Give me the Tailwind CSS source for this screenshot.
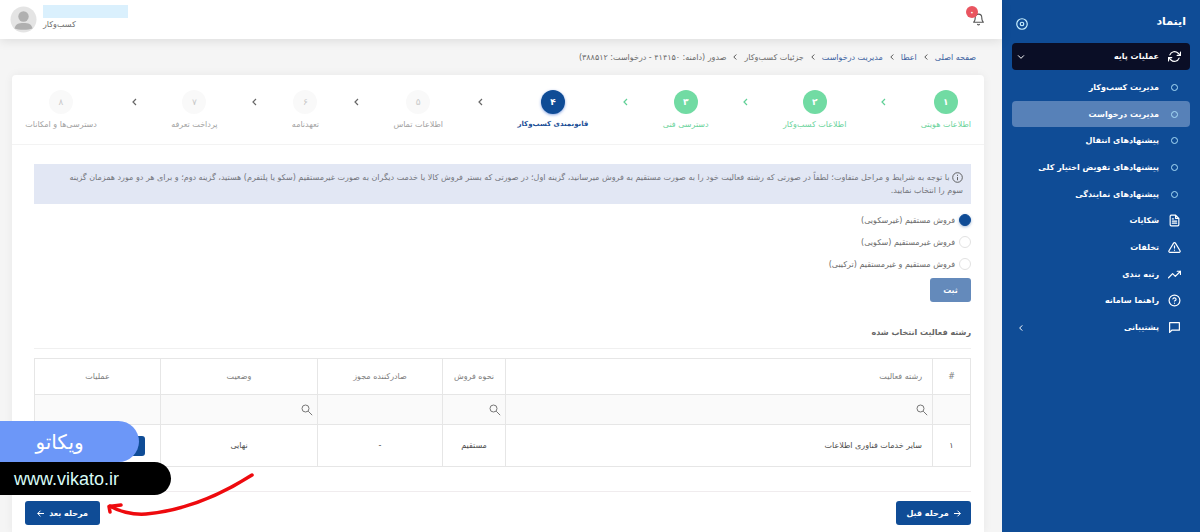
<!DOCTYPE html>
<html lang="fa" dir="rtl">
<head>
<meta charset="utf-8">
<meta name="viewport" content="width=device-width, initial-scale=1">
<title>اینماد</title>
<script src="https://cdn.jsdelivr.net/npm/@tailwindcss/browser@4"></script>
</head>
<body class="relative flex min-h-screen overflow-x-hidden bg-[#f5f5f5] font-['DejaVu_Sans',sans-serif] text-[8px] leading-[13px] text-[#6b6b6b]">

<aside class="w-[198px] shrink-0 bg-[#0f4c96] px-[10px] text-white">
  <div class="flex h-[43px] items-center justify-between px-1">
    <h1 class="text-[11px] font-bold">اینماد</h1>
    <button aria-label="جمع کردن منو" class="mt-1"><svg class="size-3" viewBox="0 0 24 24" fill="none" stroke="#c9f0ff" stroke-width="2.4"><circle cx="12" cy="12" r="10.5"/><circle cx="12" cy="12" r="3.5"/></svg></button>
  </div>
  <nav class="font-bold">
    <a href="#" class="flex h-[27px] items-center gap-[9px] rounded-sm bg-[#0a0e26] px-[9px]">
      <svg class="size-[13px]" viewBox="0 0 24 24" fill="none" stroke="currentColor" stroke-width="2.2" stroke-linecap="round" stroke-linejoin="round"><path d="M23 4v6h-6M1 20v-6h6"/><path d="M3.5 9a9 9 0 0 1 14.900-3.400L23 10M1 14l4.600 4.400A9 9 0 0 0 20.500 15"/></svg>
      <span class="grow">عملیات پایه</span>
      <svg class="-ml-1 size-2" viewBox="0 0 24 24" fill="none" stroke="currentColor" stroke-width="3" stroke-linecap="round" stroke-linejoin="round"><path d="M4 8l8 8 8-8"/></svg>
    </a>
    <ul class="mt-1">
      <li><a href="#" class="flex h-[27px] items-center gap-[9px] px-[9px]"><span class="flex w-[13px] justify-center"><span class="size-[7px] rounded-full border border-[#a9dcf7]"></span></span>مدیریت کسب‌وکار</a></li>
      <li><a href="#" class="flex h-[26px] items-center gap-[9px] rounded-sm bg-[#5781b8] px-[9px]"><span class="flex w-[13px] justify-center"><span class="size-[7px] rounded-full border border-[#a9dcf7]"></span></span>مدیریت درخواست</a></li>
      <li><a href="#" class="flex h-[27px] items-center gap-[9px] px-[9px]"><span class="flex w-[13px] justify-center"><span class="size-[7px] rounded-full border border-[#a9dcf7]"></span></span>پیشنهادهای انتقال</a></li>
      <li><a href="#" class="flex h-[27px] items-center gap-[9px] px-[9px]"><span class="flex w-[13px] justify-center"><span class="size-[7px] rounded-full border border-[#a9dcf7]"></span></span>پیشنهادهای تفویض اختیار کلی</a></li>
      <li><a href="#" class="flex h-[26px] items-center gap-[9px] px-[9px]"><span class="flex w-[13px] justify-center"><span class="size-[7px] rounded-full border border-[#a9dcf7]"></span></span>پیشنهادهای نمایندگی</a></li>
      <li><a href="#" class="flex h-[27px] items-center gap-[9px] px-[9px]"><svg class="size-[13px]" viewBox="0 0 24 24" fill="none" stroke="currentColor" stroke-width="2.200" stroke-linejoin="round" stroke-linecap="round"><path d="M14 2H6a2 2 0 0 0-2 2v16a2 2 0 0 0 2 2h12a2 2 0 0 0 2-2V8zM14 2v6h6M16 13H8M16 17H8M10 9H8"/></svg>شکایات</a></li>
      <li><a href="#" class="flex h-[27px] items-center gap-[9px] px-[9px]"><svg class="size-[13px]" viewBox="0 0 24 24" fill="none" stroke="currentColor" stroke-width="2.200" stroke-linejoin="round" stroke-linecap="round"><path d="M10.300 3.900L1.800 18a2 2 0 0 0 1.700 3h17a2 2 0 0 0 1.700-3L13.700 3.900a2 2 0 0 0-3.400 0zM12 9v4M12 17v.1"/></svg>تخلفات</a></li>
      <li><a href="#" class="flex h-[26px] items-center gap-[9px] px-[9px]"><svg class="size-[13px]" viewBox="0 0 24 24" fill="none" stroke="currentColor" stroke-width="2.200" stroke-linejoin="round" stroke-linecap="round"><path d="M23 6l-9.500 9.500-5-5L1 18M17 6h6v6"/></svg>رتبه بندی</a></li>
      <li><a href="#" class="flex h-[27px] items-center gap-[9px] px-[9px]"><svg class="size-[13px]" viewBox="0 0 24 24" fill="none" stroke="currentColor" stroke-width="2.200" stroke-linejoin="round" stroke-linecap="round"><circle cx="12" cy="12" r="10"/><path d="M9.100 9a3 3 0 0 1 5.800 1c0 2-3 3-3 3M12 17v.1"/></svg>راهنما سامانه</a></li>
      <li><a href="#" class="flex h-[27px] items-center gap-[9px] px-[9px]"><svg class="size-[13px]" viewBox="0 0 24 24" fill="none" stroke="currentColor" stroke-width="2.200" stroke-linejoin="round" stroke-linecap="round"><path d="M21 3H3v18l4-4h14z"/></svg><span class="grow">پشتیبانی</span><svg class="-ml-1 size-2" viewBox="0 0 24 24" fill="none" stroke="currentColor" stroke-width="3" stroke-linecap="round" stroke-linejoin="round"><path d="M15 5l-7 7 7 7"/></svg></a></li>
    </ul>
  </nav>
</aside>

<div class="flex min-w-0 grow flex-col">
  <header class="flex h-[39px] shrink-0 items-center justify-between bg-white px-[10px] shadow-[0_2px_10px_rgba(0,0,0,0.10)]">
    <button aria-label="اعلان‌ها" class="relative mr-[7px]">
      <svg class="size-[13px] text-[#555]" viewBox="0 0 24 24" fill="none" stroke="currentColor" stroke-width="2" stroke-linecap="round" stroke-linejoin="round"><path d="M18 8A6 6 0 0 0 6 8c0 7-3 9-3 9h18s-3-2-3-9M13.700 21a2 2 0 0 1-3.400 0"/></svg>
      <span class="absolute -top-[7px] -left-[6px] flex size-3 items-center justify-center rounded-full bg-[#e95560] text-[8px] font-bold text-white">۰</span>
    </button>
    <div class="flex items-center gap-[6px]">
      <div class="flex w-[85px] flex-col pb-1">
        <span class="h-[13px] bg-[#daf0fd]"></span>
        <span class="self-end">کسب‌وکار</span>
      </div>
      <svg class="size-[27px]" viewBox="0 0 27 27"><circle cx="13.500" cy="13.500" r="13" fill="#e4e4e4"/><circle cx="13.500" cy="10.500" r="5.200" fill="#b0b0b0"/><path d="M4.500 22.500c1-4.500 4-5.500 9-5.500s8 1 9 5.500c-2 1-5.500 1.200-9 1.200s-7-.2-9-1.200z" fill="#b0b0b0"/></svg>
    </div>
  </header>

  <nav aria-label="مسیر" class="flex h-[36px] shrink-0 items-center gap-[7px] pr-[26px] text-[#3c62a0]">
    <a href="#">صفحه اصلی</a>
    <svg class="h-[6px] w-1 text-[#555]" viewBox="0 0 4 6" fill="none" stroke="currentColor"><path d="M3.300.5L.8 3l2.500 2.500"/></svg>
    <a href="#">اعطا</a>
    <svg class="h-[6px] w-1 text-[#555]" viewBox="0 0 4 6" fill="none" stroke="currentColor"><path d="M3.300.5L.8 3l2.500 2.500"/></svg>
    <a href="#">مدیریت درخواست</a>
    <svg class="h-[6px] w-1 text-[#555]" viewBox="0 0 4 6" fill="none" stroke="currentColor"><path d="M3.300.5L.8 3l2.500 2.500"/></svg>
    <span class="text-[#6b6b6b]">جزئیات کسب‌وکار</span>
    <svg class="h-[6px] w-1 text-[#555]" viewBox="0 0 4 6" fill="none" stroke="currentColor"><path d="M3.300.5L.8 3l2.500 2.500"/></svg>
    <span class="text-[#6b6b6b]">صدور (دامنه: ۴۱۴۱۵۰ - درخواست: ۳۸۸۵۱۲)</span>
  </nav>

  <main class="mr-[18px] ml-3 flex grow flex-col rounded-t-sm bg-white px-[13px] shadow-[0_0_10px_rgba(0,0,0,0.06)]">
    <ol class="-mx-[13px] flex h-[70px] items-start justify-between border-b border-[#f3f3f3] px-[13px] pt-[15px] whitespace-nowrap text-[#a2a2a2]">
      <li class="flex flex-col items-center gap-1 text-[#6bd39c]"><span class="flex size-6 items-center justify-center rounded-full bg-[#71dba3] text-[9px] font-bold text-white">۱</span>اطلاعات هویتی</li>
      <li aria-hidden="true" class="pt-2 text-[#5fd096]"><svg class="h-2 w-[5px]" viewBox="0 0 5 8" fill="none" stroke="currentColor" stroke-width="1.200"><path d="M4 1L1 4l3 3"/></svg></li>
      <li class="flex flex-col items-center gap-1 text-[#6bd39c]"><span class="flex size-6 items-center justify-center rounded-full bg-[#71dba3] text-[9px] font-bold text-white">۲</span>اطلاعات کسب‌وکار</li>
      <li aria-hidden="true" class="pt-2 text-[#5fd096]"><svg class="h-2 w-[5px]" viewBox="0 0 5 8" fill="none" stroke="currentColor" stroke-width="1.200"><path d="M4 1L1 4l3 3"/></svg></li>
      <li class="flex flex-col items-center gap-1 text-[#6bd39c]"><span class="flex size-6 items-center justify-center rounded-full bg-[#71dba3] text-[9px] font-bold text-white">۳</span>دسترسی فنی</li>
      <li aria-hidden="true" class="pt-2 text-[#5fd096]"><svg class="h-2 w-[5px]" viewBox="0 0 5 8" fill="none" stroke="currentColor" stroke-width="1.200"><path d="M4 1L1 4l3 3"/></svg></li>
      <li aria-current="step" class="flex flex-col items-center gap-1 text-[7px] font-bold text-[#1c4f97]"><span class="flex size-6 items-center justify-center rounded-full bg-[#0f4c96] text-[9px] text-white shadow-[0_1px_3px_rgba(15,76,200,0.5)]">۴</span>قانونمندی کسب‌وکار</li>
      <li aria-hidden="true" class="pt-2 text-[#666]"><svg class="h-2 w-[5px]" viewBox="0 0 5 8" fill="none" stroke="currentColor" stroke-width="1.200"><path d="M4 1L1 4l3 3"/></svg></li>
      <li class="flex flex-col items-center gap-1"><span class="flex size-6 items-center justify-center rounded-full bg-[#f9f9f9] text-[9px] text-[#c8c8c8]">۵</span>اطلاعات تماس</li>
      <li aria-hidden="true" class="pt-2 text-[#666]"><svg class="h-2 w-[5px]" viewBox="0 0 5 8" fill="none" stroke="currentColor" stroke-width="1.200"><path d="M4 1L1 4l3 3"/></svg></li>
      <li class="flex flex-col items-center gap-1"><span class="flex size-6 items-center justify-center rounded-full bg-[#f9f9f9] text-[9px] text-[#c8c8c8]">۶</span>تعهدنامه</li>
      <li aria-hidden="true" class="pt-2 text-[#666]"><svg class="h-2 w-[5px]" viewBox="0 0 5 8" fill="none" stroke="currentColor" stroke-width="1.200"><path d="M4 1L1 4l3 3"/></svg></li>
      <li class="flex flex-col items-center gap-1"><span class="flex size-6 items-center justify-center rounded-full bg-[#f9f9f9] text-[9px] text-[#c8c8c8]">۷</span>پرداخت تعرفه</li>
      <li aria-hidden="true" class="pt-2 text-[#666]"><svg class="h-2 w-[5px]" viewBox="0 0 5 8" fill="none" stroke="currentColor" stroke-width="1.200"><path d="M4 1L1 4l3 3"/></svg></li>
      <li class="flex flex-col items-center gap-1"><span class="flex size-6 items-center justify-center rounded-full bg-[#f9f9f9] text-[9px] text-[#c8c8c8]">۸</span>دسترسی‌ها و امکانات</li>
    </ol>

    <div class="ml-[9px] pt-[19px]">
      <p class="min-h-[40px] bg-[#e2e7f4] px-2 py-[7px] text-[#73757c]">
        <svg class="inline size-[11px]" viewBox="0 0 24 24" fill="none" stroke="#555" stroke-width="2"><circle cx="12" cy="12" r="10.500"/><path d="M12 11v7M12 6v2.500"/></svg>
        با توجه به شرایط و مراحل متفاوت؛ لطفاً در صورتی که رشته فعالیت خود را به صورت مستقیم به فروش میرسانید، گزینه اول؛ در صورتی که بستر فروش کالا یا خدمت دیگران به صورت غیرمستقیم (سکو یا پلتفرم) هستید، گزینه دوم؛ و برای هر دو مورد همزمان گزینه <span class="whitespace-nowrap">سوم را انتخاب نمایید.</span>
      </p>
      <form>
        <div class="flex flex-col items-start pt-[5px]">
          <label class="flex h-[22px] items-center gap-1"><input type="radio" name="sale" checked class="size-3 appearance-none rounded-full border border-[#e2e2e2] checked:border-[#0f4c96] checked:bg-[#0f4c96] checked:shadow-[0_1px_3px_rgba(15,76,150,0.4)]">فروش مستقیم (غیرسکویی)</label>
          <label class="flex h-[22px] items-center gap-1"><input type="radio" name="sale" class="size-3 appearance-none rounded-full border border-[#e2e2e2] checked:bg-[#0f4c96]">فروش غیرمستقیم (سکویی)</label>
          <label class="flex h-[22px] items-center gap-1"><input type="radio" name="sale" class="size-3 appearance-none rounded-full border border-[#e2e2e2] checked:bg-[#0f4c96]">فروش مستقیم و غیرمستقیم (ترکیبی)</label>
        </div>
        <button type="button" class="mt-[3px] flex h-6 w-[41px] items-center justify-center rounded-[3px] bg-[#648abb] font-bold text-white">ثبت</button>
      </form>
      <h2 class="mt-6 border-b border-[#f0f0f0] pb-[9px] font-bold text-[#666]">رشته فعالیت انتخاب شده</h2>

      <table class="mt-[9px] w-full table-fixed border-collapse border border-[#dedede] text-center">
        <colgroup><col class="w-[38px]"><col><col class="w-[63px]"><col class="w-[125px]"><col class="w-[157px]"><col class="w-[126px]"></colgroup>
        <thead>
          <tr class="h-9 text-[#7d7d7d] *:border *:border-[#e6e6e6] *:font-normal">
            <th>#</th><th class="pr-[10px] text-right">رشته فعالیت</th><th>نحوه فروش</th><th>صادرکننده مجوز</th><th>وضعیت</th><th>عملیات</th>
          </tr>
          <tr class="h-[30px] bg-[#fafafa] *:border *:border-[#e6e6e6]">
            <td></td>
            <td class="pr-1"><button aria-label="جستجوی رشته فعالیت" class="block"><svg class="size-3" viewBox="0 0 12 12" fill="none" stroke="#777"><circle cx="4.500" cy="4.500" r="3.500"/><path d="M7.200 7.200l4 4"/></svg></button></td>
            <td class="pr-1"><button aria-label="جستجوی نحوه فروش" class="block"><svg class="size-3" viewBox="0 0 12 12" fill="none" stroke="#777"><circle cx="4.500" cy="4.500" r="3.500"/><path d="M7.200 7.200l4 4"/></svg></button></td>
            <td></td>
            <td class="pr-1"><button aria-label="جستجوی وضعیت" class="block"><svg class="size-3" viewBox="0 0 12 12" fill="none" stroke="#777"><circle cx="4.500" cy="4.500" r="3.500"/><path d="M7.200 7.200l4 4"/></svg></button></td>
            <td></td>
          </tr>
        </thead>
        <tbody>
          <tr class="h-[42px] text-[#4c4c4c] *:border *:border-[#e6e6e6]">
            <td>۱</td><td class="pr-[10px] text-right">سایر خدمات فناوری اطلاعات</td><td>مستقیم</td><td>-</td><td>نهایی</td>
            <td><button aria-label="مشاهده" class="mr-[15px] block h-5 w-6 rounded-[3px] bg-[#0f4c96]"></button></td>
          </tr>
        </tbody>
      </table>
    </div>

    <div class="mt-6 flex justify-between border-t border-[#f0ecee] pt-[9px] pb-2 font-bold">
      <button class="flex h-6 w-[75px] items-center justify-center gap-[5px] rounded-[3px] bg-[#0f4c96] text-white"><svg class="size-[7px]" viewBox="0 0 7 7" fill="none" stroke="currentColor"><path d="M0 3.500h6.300M3.500.7l2.800 2.800-2.800 2.800"/></svg>مرحله قبل</button>
      <button class="flex h-6 w-[75px] items-center justify-center gap-[5px] rounded-[3px] bg-[#0f4c96] text-white">مرحله بعد<svg class="size-[7px]" viewBox="0 0 7 7" fill="none" stroke="currentColor"><path d="M7 3.500H.7M3.500.7L.7 3.500l2.800 2.800"/></svg></button>
    </div>
  </main>
</div>

<!-- Site badge and pointer laid over the page -->
<div class="absolute top-[421px] left-0 flex flex-col items-end" dir="ltr">
  <div dir="rtl" class="flex h-[41px] w-[139px] items-center justify-center self-start rounded-tr-[21px] rounded-br-[21px] bg-[#6c97f8] pr-5 text-[20px] leading-6 text-white">ویکاتو</div>
  <div class="flex h-[33px] w-[171px] items-center rounded-r-full bg-black pl-[14px] font-['Liberation_Sans',sans-serif] text-[18px] leading-6 text-[#d8fbf6]">www.vikato.ir</div>
</div>
<svg class="absolute top-[470px] left-[104px] h-[48px] w-[152px]" viewBox="0 0 152 48" fill="none" stroke="#ee0a0e" stroke-linecap="round" stroke-linejoin="round" stroke-width="3.500"><path d="M148 5C112 28 75 41 42 44 28 45 14 41 6 36"/><path d="M17 35L5 36.500 6 42"/></svg>
</body>
</html>
